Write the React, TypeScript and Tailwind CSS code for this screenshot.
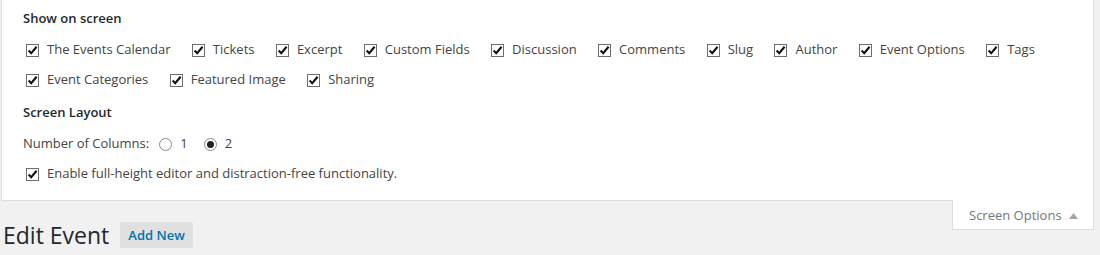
import React from 'react'

const screenItems = [
  ['The Events Calendar', 'Tickets', 'Excerpt', 'Custom Fields', 'Discussion', 'Comments', 'Slug', 'Author', 'Event Options', 'Tags'],
  ['Event Categories', 'Featured Image', 'Sharing'],
]

function CheckBox() {
  return (
    <span className="w-[13px] h-[13px] border border-[#6d6d6d] bg-white flex items-center justify-center shrink-0">
      <svg width="11" height="11" viewBox="0 0 11 11">
        <polyline points="1.6,5.6 4.2,8.2 9.6,1.8" fill="none" stroke="#111" strokeWidth="2.1" />
      </svg>
    </span>
  )
}

function Radio({ checked }: { checked?: boolean }) {
  return (
    <span className="w-[13px] h-[13px] rounded-full border border-[#8a8a8a] bg-white flex items-center justify-center shrink-0">
      {checked && <span className="w-[7px] h-[7px] rounded-full bg-[#222]" />}
    </span>
  )
}

function CheckLabel({ label }: { label: string }) {
  return (
    <label className="flex items-center gap-[8px] mr-[21.4px]">
      <CheckBox />
      <span>{label}</span>
    </label>
  )
}

export default function App() {
  return (
    <div
      className="min-h-screen bg-[#f1f1f1] text-[13px] text-[#444]"
      style={{ fontFamily: '"Open Sans", "Liberation Sans", sans-serif' }}
    >
      <div className="ml-[1px] mr-[6px] bg-white border-x border-b border-[#dddddd] pl-[21px] pt-[8px] pb-[11px]">
        <div className="h-[20px] leading-[20px] font-semibold text-[#23282d]">Show on screen</div>
        <div className="mt-[7px] pl-[3px]">
          {screenItems.map((row, i) => (
            <div key={i} className="flex items-center h-[30px]">
              {row.map((item) => (
                <CheckLabel key={item} label={item} />
              ))}
            </div>
          ))}
        </div>
        <div className="mt-[7px] h-[20px] leading-[20px] font-semibold text-[#23282d]">Screen Layout</div>
        <div className="mt-[7px] flex items-center h-[30px]">
          <span>Number of Columns:</span>
          <label className="flex items-center gap-[8px] ml-[10px]">
            <Radio />
            <span>1</span>
          </label>
          <label className="flex items-center gap-[8px] ml-[16px]">
            <Radio checked />
            <span>2</span>
          </label>
        </div>
        <div className="flex items-center h-[30px] pl-[3px]">
          <CheckLabel label="Enable full-height editor and distraction-free functionality." />
        </div>
      </div>

      <div className="flex items-start justify-between">
        <div className="flex items-center mt-[21px] ml-[3px]">
          <h1 className="text-[23px] leading-[26px] text-[#23282d]">Edit Event</h1>
          <button className="ml-[11px] h-[26px] px-[8px] rounded-[2px] bg-[#e0e0e0] text-[#0073aa] font-semibold leading-[26px]">
            Add New
          </button>
        </div>
        <div className="-mt-[1px] mr-[6px] w-[142px] h-[30px] pt-[2px] bg-white border-x border-b border-[#dddddd] flex items-center pl-[16px] text-[#72777c]">
          <span>Screen Options</span>
          <svg className="ml-[7px]" width="9" height="6" viewBox="0 0 9 6">
            <polygon points="0,6 9,6 4.5,0" fill="#a0a5aa" />
          </svg>
        </div>
      </div>
    </div>
  )
}
